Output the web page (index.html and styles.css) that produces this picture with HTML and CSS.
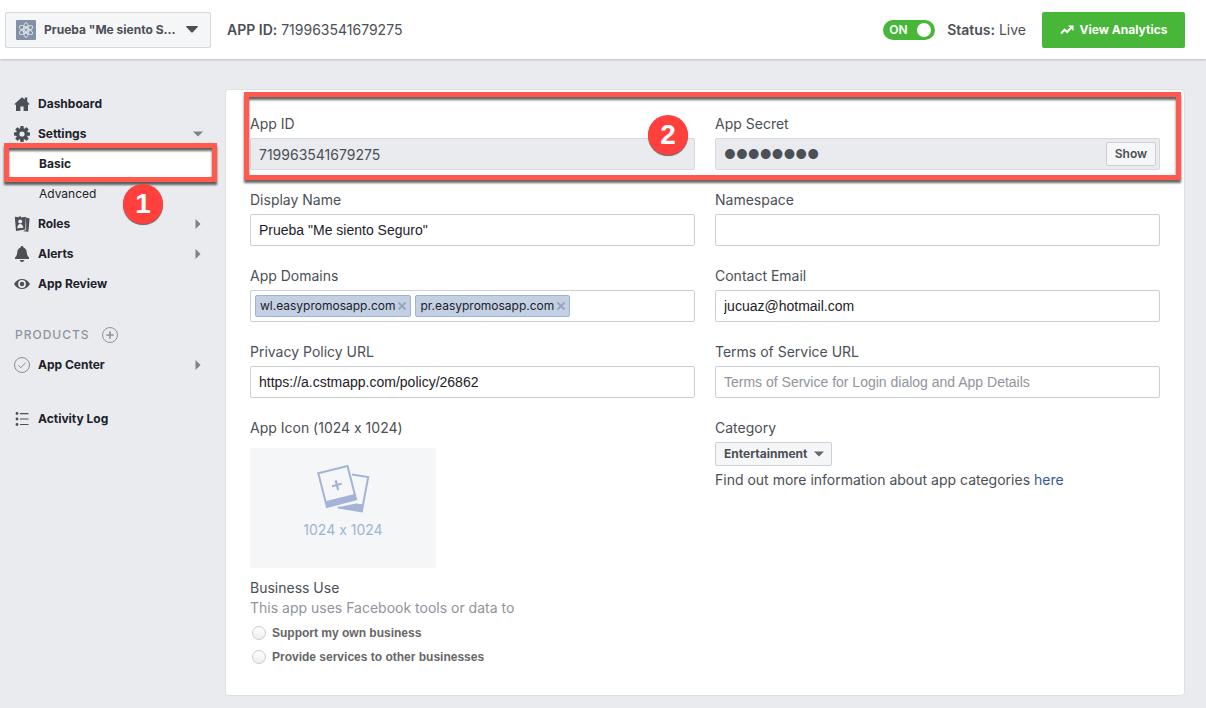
FILE: index.html
```html
<!DOCTYPE html>
<html lang="en">
<head>
    <meta charset="UTF-8">
    <meta name="viewport" content="width=device-width, initial-scale=1.0">
    <title>Basic Settings - App Dashboard</title>
    <link rel="stylesheet" href="styles.css">
</head>
<body>
<header class="topbar">
    <button type="button" class="app-picker">
        <svg class="app-logo" width="20" height="20" viewBox="0 0 20 20">
            <rect width="20" height="20" rx="1" fill="#8490a5"/>
            <g fill="none" stroke="#dfe4ec" stroke-width="0.9">
                <ellipse cx="10" cy="10" rx="2.6" ry="7.5"/>
                <ellipse cx="10" cy="10" rx="2.6" ry="7.5" transform="rotate(60 10 10)"/>
                <ellipse cx="10" cy="10" rx="2.6" ry="7.5" transform="rotate(120 10 10)"/>
                <circle cx="10" cy="10" r="1.6"/>
            </g>
        </svg>
        <span class="app-name">Prueba "Me siento S...</span>
        <svg width="12" height="7" viewBox="0 0 12 7"><path d="M0.5 0h11q0.6 0.6 0 1.2L7 6q-1 1-2 0L0.5 1.2q-0.6-0.6 0-1.2z" fill="#4b4f56"/></svg>
    </button>
    <div class="app-id"><strong>APP ID:</strong> 719963541679275</div>
    <div class="status">
        <span class="switch">
            <input type="checkbox" id="live" aria-label="App is live" checked>
            <span class="switch-text">ON</span>
        </span>
        <label for="live"><b>Status:</b> Live</label>
    </div>
    <button type="button" class="analytics">
        <svg width="14" height="10" viewBox="0 0 14 10"><path d="M1 8.5l3.6-3.8 2.6 2.3L11 2.8" fill="none" stroke="#fff" stroke-width="2"/><path d="M8 0.5h5.5V6z" fill="#fff"/></svg>
        View Analytics
    </button>
</header>

<div class="layout">
    <nav class="sidebar">
        <a href="#" class="item">
            <svg class="icon" width="16" height="16" viewBox="0 0 16 16" fill="#4b4f56"><path d="M8 1.2l2.8 2.3V1.6h2.4v4L15.5 8 14.6 9 14 8.5V15H9.6v-4.5H6.4V15H2V8.5L1.4 9 0.5 8z"/></svg>
            Dashboard
        </a>
        <a href="#" class="item">
            <svg class="icon" width="16" height="16" viewBox="0 0 16 16" fill="#4b4f56">
                <g id="tooth"><rect x="6.3" y="0" width="3.4" height="16" rx="0.6"/><rect x="0" y="6.3" width="16" height="3.4" rx="0.6"/></g>
                <use href="#tooth" transform="rotate(45 8 8)"/>
                <circle cx="8" cy="8" r="6"/>
                <circle cx="8" cy="8" r="2.6" fill="#e9ebee"/>
            </svg>
            Settings
            <svg class="arrow" width="10" height="10" viewBox="0 0 10 10"><path d="M0 2.5h10L5 7.5z" fill="#7f8185"/></svg>
        </a>
        <a href="#" class="item sub current">Basic<span class="mark mark-basic"></span></a>
        <a href="#" class="item sub">Advanced<span class="badge badge-one">1</span></a>
        <a href="#" class="item">
            <svg class="icon" width="16" height="16" viewBox="0 0 16 16">
                <path d="M12 1.6l3.6 0.8-1.2 13.4-5.4-0.6 3.2-1.4z" fill="#4b4f56"/>
                <path d="M0.8 0.8l3.9 0.5V0.400h2.400v1l4.700-0.600L11.300 13.400 2 15z" fill="#4b4f56"/>
                <circle cx="6.200" cy="5.600" r="2" fill="#e9ebee"/>
                <path d="M3.300 12.200q0.300-4.200 2.900-4.200t3.200 3.800z" fill="#e9ebee"/>
            </svg>
            Roles
            <svg class="arrow" width="10" height="10" viewBox="0 0 10 10"><path d="M2.5 0v10L7.5 5z" fill="#7f8185"/></svg>
        </a>
        <a href="#" class="item">
            <svg class="icon" width="16" height="16" viewBox="0 0 16 16" fill="#4b4f56"><path d="M8 0q1.4 0 1.5 1.4Q12.5 2.4 12.7 6q0.1 3.600 2.300 5.400v1.600H1v-1.600Q3.200 9.600 3.300 6 3.500 2.400 6.500 1.400 6.600 0 8 0zM5.600 14h4.800Q9.800 16 8 16t-2.400-2z"/></svg>
            Alerts
            <svg class="arrow" width="10" height="10" viewBox="0 0 10 10"><path d="M2.5 0v10L7.5 5z" fill="#7f8185"/></svg>
        </a>
        <a href="#" class="item">
            <svg class="icon" width="16" height="16" viewBox="0 0 16 16"><path d="M0 8q3-5 8-5t8 5q-3 5-8 5T0 8z" fill="#4b4f56"/><circle cx="8" cy="8" r="3.900" fill="#e9ebee"/><circle cx="8" cy="8" r="2.200" fill="#4b4f56"/></svg>
            App Review
        </a>

        <div class="products">
            PRODUCTS
            <button type="button" class="add" aria-label="Add product">
                <svg width="16" height="16" viewBox="0 0 16 16" fill="none" stroke="#8d949e"><circle cx="8" cy="8" r="7.5"/><path d="M8 4.300v7.400M4.300 8h7.400" stroke-width="1.600"/></svg>
            </button>
        </div>
        <a href="#" class="item">
            <svg class="icon" width="16" height="16" viewBox="0 0 16 16" fill="none" stroke="#8a8d93"><circle cx="8" cy="8" r="7.5"/><path d="M4.500 8.300l2.300 2.400 4.700-5"/></svg>
            App Center
            <svg class="arrow" width="10" height="10" viewBox="0 0 10 10"><path d="M2.5 0v10L7.5 5z" fill="#7f8185"/></svg>
        </a>
        <a href="#" class="item log">
            <svg class="icon" width="16" height="16" viewBox="0 0 16 16" fill="#4b4f56"><circle cx="3" cy="2.500" r="1.400"/><circle cx="3" cy="8" r="1.400"/><circle cx="3" cy="13.500" r="1.400"/><path d="M6 2h8.500v1.200H6zM6 7.400h8.500v1.200H6zM6 12.900h8.500v1.200H6z"/></svg>
            Activity Log
        </a>
    </nav>

    <main class="panel">
        <form class="fields">
            <div class="keys">
                <div class="field">
                    <label for="app-id">App ID</label>
                    <input type="text" id="app-id" class="readonly" value="719963541679275" readonly>
                </div>
                <div class="field">
                    <label for="secret">App Secret</label>
                    <div class="secret">
                        <input type="text" id="secret" value="●●●●●●●●" readonly>
                        <button type="button">Show</button>
                    </div>
                </div>
                <span class="mark mark-keys"></span>
                <span class="badge badge-two">2</span>
            </div>

            <div class="field">
                <label for="name">Display Name</label>
                <input type="text" id="name" value='Prueba "Me siento Seguro"'>
            </div>
            <div class="field">
                <label for="namespace">Namespace</label>
                <input type="text" id="namespace">
            </div>

            <div class="field">
                <label for="domains">App Domains</label>
                <div class="tokens">
                    <span class="token">wl.easypromosapp.com<button type="button" aria-label="Remove wl.easypromosapp.com"><svg width="8" height="8" viewBox="0 0 8 8"><path d="M0.5 0.5l7 7M7.5 0.5l-7 7" stroke="#9aa5ba" stroke-width="2"/></svg></button></span>
                    <span class="token">pr.easypromosapp.com<button type="button" aria-label="Remove pr.easypromosapp.com"><svg width="8" height="8" viewBox="0 0 8 8"><path d="M0.5 0.5l7 7M7.5 0.5l-7 7" stroke="#9aa5ba" stroke-width="2"/></svg></button></span>
                    <input type="text" id="domains">
                </div>
            </div>
            <div class="field">
                <label for="email">Contact Email</label>
                <input type="email" id="email" value="jucuaz@hotmail.com">
            </div>

            <div class="field">
                <label for="privacy">Privacy Policy URL</label>
                <input type="text" id="privacy" value="https://a.cstmapp.com/policy/26862">
            </div>
            <div class="field">
                <label for="terms">Terms of Service URL</label>
                <input type="text" id="terms" placeholder="Terms of Service for Login dialog and App Details">
            </div>

            <div class="field">
                <span class="label">App Icon (1024 x 1024)</span>
                <button type="button" class="upload">
                    <svg width="54" height="50" viewBox="0 0 54 50">
                        <path d="M36 10.5L52.200 13 45.800 47.300 22 43.500" fill="none" stroke="#a4b3d6" stroke-width="2"/>
                        <path d="M40 39.500l7.600 1-1.200 7.200L21 43.500z" fill="#a4b3d6"/>
                        <path d="M0.500 8.500L33 0l9.500 36.500L9.500 45z" fill="#f5f6f7"/>
                        <path d="M2.300 9.200L31.500 2l8.600 33.400L10.900 43z" fill="#f5f6f7" stroke="#a4b3d6" stroke-width="2"/>
                        <path d="M9.200 37.300L38.700 30l1.600 5.600L10.900 43z" fill="#a4b3d6"/>
                        <path d="M19.700 16.200l2.400 9.700M16 22.300l9.700-2.500" stroke="#a4b3d6" stroke-width="2.200"/>
                    </svg>
                    1024 x 1024
                </button>
            </div>
            <div class="field">
                <label for="category">Category</label>
                <span class="dropdown">
                    <select id="category">
                        <option>Entertainment</option>
                    </select>
                    <svg width="10" height="6" viewBox="0 0 10 6"><path d="M0 0.5h10L5 5.5z" fill="#606770"/></svg>
                </span>
                <p class="hint">Find out more information about app categories <a href="#">here</a></p>
            </div>

            <fieldset class="business">
                <legend>Business Use</legend>
                <p>This app uses Facebook tools or data to</p>
                <label><input type="radio" name="business"> Support my own business</label>
                <label><input type="radio" name="business"> Provide services to other businesses</label>
            </fieldset>
        </form>
    </main>
</div>
</body>
</html>
```
FILE: styles.css
```css
* { box-sizing: border-box; }
body {
    margin: 0; min-height: 100vh; background: #e9ebee; color: #4b4f56;
    font: 14px/20px Inter, "Liberation Sans", sans-serif;
    font-variant-ligatures: no-contextual; /* keeps the x in 1024 x 1024 a letter */
}
button, input, select { font: inherit; font-variant-ligatures: inherit; color: inherit; margin: 0; }
button { padding: 0; cursor: pointer; }
p { margin: 0; }
svg { display: block; flex: none; }

/* Top bar */
.topbar {
    position: relative; display: flex; align-items: center; min-height: 59px;
    padding: 0 21px 0 5px; background: #fff; box-shadow: 0 1px 2px rgba(0,0,0,0.2);
}
.app-picker {
    display: flex; align-items: center; width: 206px; height: 36px; padding: 0 12px 0 10px;
    background: #f5f6f7; border: 1px solid #d5d8de; border-radius: 2px; font-weight: 700; font-size: 12px;
}
.app-name { flex: 1; margin-left: 8px; text-align: left; white-space: nowrap; }
.app-id { margin-left: 16px; }
.app-id strong { font-weight: 600; }
.status { display: flex; align-items: center; gap: 12px; margin-left: auto; }
.status b { font-weight: 600; }
.switch { position: relative; display: flex; }
.switch input {
    appearance: none; width: 52px; height: 20px; background: #48b638; border-radius: 10px; cursor: pointer;
}
.switch input::before {
    content: ""; display: block; width: 14px; height: 14px; margin: 3px 4px 3px auto; background: #fff; border-radius: 50%;
}
.switch-text {
    position: absolute; left: 6px; top: 0; color: #fff; font-size: 12px; font-weight: 600; pointer-events: none;
}
.analytics {
    display: flex; align-items: center; justify-content: center; gap: 6px; width: 143px; height: 36px; margin-left: 16px;
    background: #48b638; border: 0; border-radius: 2px; color: #fff; font-size: 12px; font-weight: 700;
}

.layout { display: grid; grid-template-columns: 225px minmax(0, 1fr); align-items: start; padding: 30px 21px 12px 0; }

/* Left menu */
.item {
    position: relative; display: flex; align-items: center; height: 30px; padding: 0 22px 0 14px;
    color: #1d2129; font-size: 12px; font-weight: 700; text-decoration: none;
}
.icon { margin-right: 8px; }
.arrow { margin-left: auto; }
.item.sub { margin: 0 10px 0 8px; padding-left: 31px; font-weight: 400; }
.item.current { background: #fff; font-weight: 700; }
.products {
    display: flex; align-items: center; gap: 12px; margin-top: 21px; height: 30px; padding-left: 15px;
    color: #90949c; font-size: 12px; font-weight: 500; letter-spacing: 1px;
}
.add { background: none; border: 0; }
.log { margin-top: 24px; }

/* Highlights over the page */
.mark {
    position: absolute; border: 5px solid #ff5a4d; filter: drop-shadow(0 3px 1px rgba(0,0,0,0.6)); pointer-events: none;
}
.mark-basic { inset: -6px -2px -3px -4px; }
.mark-keys { inset: -22px -21px -10px -6px; }
.badge {
    position: absolute; width: 40px; height: 40px; border-radius: 50%; background: #ff403c; color: #fff;
    box-shadow: 0 1px 1px rgba(0,0,0,0.6); font: bold 28px/40px "Liberation Sans", Arial, sans-serif; text-align: center;
}
.badge-one { left: 115px; top: 5px; }
.badge-two { left: 398px; top: 1px; }

/* Settings panel */
.panel { padding: 24px 24px 26px; background: #fff; border: 1px solid #dddfe2; border-radius: 4px; }
.fields { display: grid; grid-template-columns: repeat(2, minmax(0, 1fr)); gap: 20px; }
.keys { position: relative; grid-column: 1 / -1; display: grid; grid-template-columns: repeat(2, minmax(0, 1fr)); gap: 20px; }
.field label, .field .label { display: block; margin-bottom: 4px; }
.field > input, .tokens, .secret {
    display: block; width: 100%; height: 32px; padding: 0 8px; background: #fff; border: 1px solid #ccd0d5; border-radius: 2px;
}
.field > input { color: #1d2129; font-family: "Liberation Sans", Arial, sans-serif; }
.field > input::placeholder { color: #90949c; }
.field > input.readonly, .secret { background: #e9ebee; border-color: #d5d8de; color: #4b4f56; }
.field > input.readonly { font-family: inherit; }
.secret { display: flex; align-items: center; padding-right: 3px; }
.secret input { flex: 1; min-width: 0; padding: 0; background: none; border: 0; font-size: 13px; }
.secret button {
    width: 50px; height: 24px; background: #f5f6f7; border: 1px solid #ccd0d5; border-radius: 2px; font-size: 12px; font-weight: 600;
}
.tokens { display: flex; align-items: center; gap: 4px; padding: 0 4px; }
.tokens input { flex: 1; min-width: 0; border: 0; padding: 0; }
.token {
    display: flex; align-items: center; gap: 3px; height: 22px; padding: 0 4px;
    background: #c3d0e4; border: 1px solid #9cb4d8; border-radius: 2px; color: #1d2129; font-size: 12px;
}
.token button { background: none; border: 0; }

.field .label + .upload { margin-top: 10px; }
.upload {
    display: flex; flex-direction: column; align-items: center; gap: 6px; width: 186px; height: 120px; padding-top: 16px;
    background: #f5f6f7; border: 0; color: #9cb4d8;
}
.dropdown { position: relative; display: inline-flex; vertical-align: top; }
.dropdown select {
    appearance: none; width: 117px; height: 24px; padding: 0 8px; background: #f5f6f7;
    border: 1px solid #ccd0d5; border-radius: 2px; font-size: 12px; font-weight: 700;
}
.dropdown svg { position: absolute; right: 8px; top: 9px; pointer-events: none; }
.hint { margin-top: 4px; }
.hint a { color: #365899; text-decoration: none; }

.business { grid-column: 1 / -1; min-width: 0; margin: -10px 0 0; padding: 0; border: 0; }
.business legend { padding: 0; }
.business p { margin-bottom: 3px; color: #90949c; }
.business label {
    display: flex; align-items: center; gap: 6px; height: 24px; padding-left: 2px;
    color: #666; font: bold 12px/24px "Liberation Sans", Arial, sans-serif;
}
.business input {
    appearance: none; width: 14px; height: 14px; border: 1px solid #ccc; border-radius: 50%;
    background: linear-gradient(#fff, #eee);
}
```
